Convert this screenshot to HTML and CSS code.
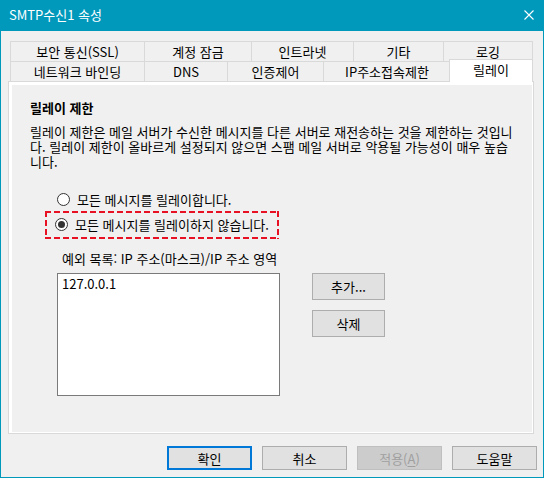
FILE: index.html
```html
<!DOCTYPE html>
<html lang="ko">
<head>
<meta charset="utf-8">
<title>SMTP수신1 속성</title>
<link rel="stylesheet" href="styles.css">
</head>
<body>
<div class="window">
  <div class="titlebar">
    <span class="title">SMTP수신1 속성</span>
    <svg class="close" width="10" height="10" viewBox="0 0 10 10"><path d="M0.5 0.5 L9.5 9.5 M9.5 0.5 L0.5 9.5" stroke="#fff" stroke-width="1.1" fill="none"/></svg>
  </div>
  <div class="content">
    <div class="tabs">
      <div class="tab-row">
        <div class="tab w134">보안 통신(SSL)</div>
        <div class="tab w107">계정 잠금</div>
        <div class="tab w102">인트라넷</div>
        <div class="tab w90">기타</div>
        <div class="tab w90 last">로깅</div>
      </div>
      <div class="tab-row">
        <div class="tab w134">네트워크 바인딩</div>
        <div class="tab w83">DNS</div>
        <div class="tab w96">인증제어</div>
        <div class="tab w127">IP주소접속제한</div>
        <div class="tab active">릴레이</div>
      </div>
    </div>
    <div class="panel">
      <div class="page">
        <div class="heading">릴레이 제한</div>
        <p class="desc">릴레이 제한은 메일 서버가 수신한 메시지를 다른 서버로 재전송하는 것을 제한하는 것입니다. 릴레이 제한이 올바르게 설정되지 않으면 스팸 메일 서버로 악용될 가능성이 매우 높습니다.</p>
        <div class="radios">
          <div class="radio-row first"><span class="radio"></span><span>모든 메시지를 릴레이합니다.</span></div>
          <div class="highlight">
            <div class="radio-row"><span class="radio checked"></span><span>모든 메시지를 릴레이하지 않습니다.</span></div>
          </div>
        </div>
        <div class="list-label">예외 목록: IP 주소(마스크)/IP 주소 영역</div>
        <div class="list-area">
          <div class="listbox"><div class="item">127.0.0.1</div></div>
          <div class="side-buttons">
            <div class="btn side">추가...</div>
            <div class="btn side">삭제</div>
          </div>
        </div>
      </div>
    </div>
    <div class="footer">
      <div class="btn foot default">확인</div>
      <div class="btn foot">취소</div>
      <div class="btn foot disabled">적용(<u>A</u>)</div>
      <div class="btn foot">도움말</div>
    </div>
  </div>
</div>
</body>
</html>
```
FILE: styles.css
```css
* { box-sizing: border-box; }
html, body { margin: 0; padding: 0; }
body {
  font-family: "Noto Sans CJK KR", sans-serif;
  font-size: 13px;
  color: #000;
  background: #f0f0f0;
}
.window {
  width: 544px;
  height: 478px;
  border: 1px solid #0099bc;
  border-top: 0;
  background: #f0f0f0;
  display: flex;
  flex-direction: column;
}
.titlebar {
  height: 31px;
  margin: 0 -1px;
  background: #0099bc;
  color: #fff;
  display: flex;
  align-items: center;
  padding-left: 9px;
  padding-right: 10px;
  flex: none;
}
.title { line-height: 16px; padding-bottom: 1px; }
.close { margin-left: auto; margin-bottom: 1px; }
.content {
  flex: 1;
  padding: 10px 6px 0 7px;
  display: flex;
  flex-direction: column;
}
.tabs { margin-left: 2px; }
.tab-row { display: flex; height: 20px; }
.tab {
  height: 20px;
  border-top: 1px solid #d9d9d9;
  border-left: 1px solid #d9d9d9;
  text-align: center;
  line-height: 19px;
  white-space: nowrap;
  background: #f0f0f0;
}
.tab.last { border-right: 1px solid #d9d9d9; }
.w134 { width: 134px; }
.w107 { width: 107px; }
.w102 { width: 102px; }
.w90 { width: 90px; }
.w83 { width: 83px; }
.w96 { width: 96px; }
.w127 { width: 127px; }
.tab.active {
  width: 84px;
  height: 23px;
  margin-top: -2px;
  margin-left: -1px;
  border: 1px solid #d9d9d9;
  border-bottom: 0;
  background: #fff;
  line-height: 20px;
  padding-bottom: 2px;
  position: relative;
  z-index: 1;
}
.panel {
  width: 526px;
  height: 353px;
  border: 1px solid #d9d9d9;
  background: #fff;
  padding: 3px 1px 1px 3px;
  display: flex;
  flex: none;
}
.page {
  flex: 1;
  background: #f0f0f0;
  padding: 15px 0 0 18px;
  line-height: 15px;
}
.heading { font-weight: bold; }
.desc {
  margin: 9px 0 0 0;
  width: 484px;
}
.radios {
  margin: 23px 0 0 15px;
  width: 234px;
}
.radio-row {
  display: flex;
  align-items: center;
  height: 15px;
  gap: 7px;
}
.radio-row.first { padding-left: 12px; }
.radio {
  width: 13px;
  height: 13px;
  border: 1px solid #333;
  border-radius: 50%;
  background: #fff;
  display: flex;
  align-items: center;
  justify-content: center;
  flex: none;
}
.radio.checked::after {
  content: "";
  width: 7px;
  height: 7px;
  border-radius: 50%;
  background: #333;
}
.highlight {
  margin-top: 4px;
  height: 28px;
  padding: 6px 0 0 10px;
  background:
    repeating-linear-gradient(90deg, #e81123 0 6px, transparent 6px 9px) top left / 100% 2px no-repeat,
    repeating-linear-gradient(90deg, #e81123 0 6px, transparent 6px 9px) bottom left / 100% 2px no-repeat,
    repeating-linear-gradient(180deg, #e81123 0 6px, transparent 6px 9px) top left / 2px 100% no-repeat,
    repeating-linear-gradient(180deg, #e81123 0 6px, transparent 6px 9px) top right / 2px 100% no-repeat;
}
.list-label {
  margin: 12px 0 0 32px;
}
.list-area {
  display: flex;
  margin: 7px 0 0 27px;
  gap: 32px;
}
.listbox {
  width: 223px;
  height: 123px;
  border: 1px solid #7a7a7a;
  background: #fff;
  padding: 2px 0 0 4px;
}
.side-buttons {
  display: flex;
  flex-direction: column;
  gap: 10px;
}
.btn {
  background: #e1e1e1;
  border: 1px solid #adadad;
  display: flex;
  align-items: center;
  justify-content: center;
  line-height: 15px;
}
.btn.side { width: 73px; height: 27px; }
.footer {
  display: flex;
  justify-content: flex-end;
  gap: 10px;
  margin-top: 12px;
}
.btn.foot { width: 85px; height: 24px; }
.btn.default { border: 2px solid #0078d7; }
.btn.disabled { background: #cccccc; border-color: #bfbfbf; color: #a0a0a0; }
.btn u { text-decoration: underline; text-underline-offset: 2px; }
```
